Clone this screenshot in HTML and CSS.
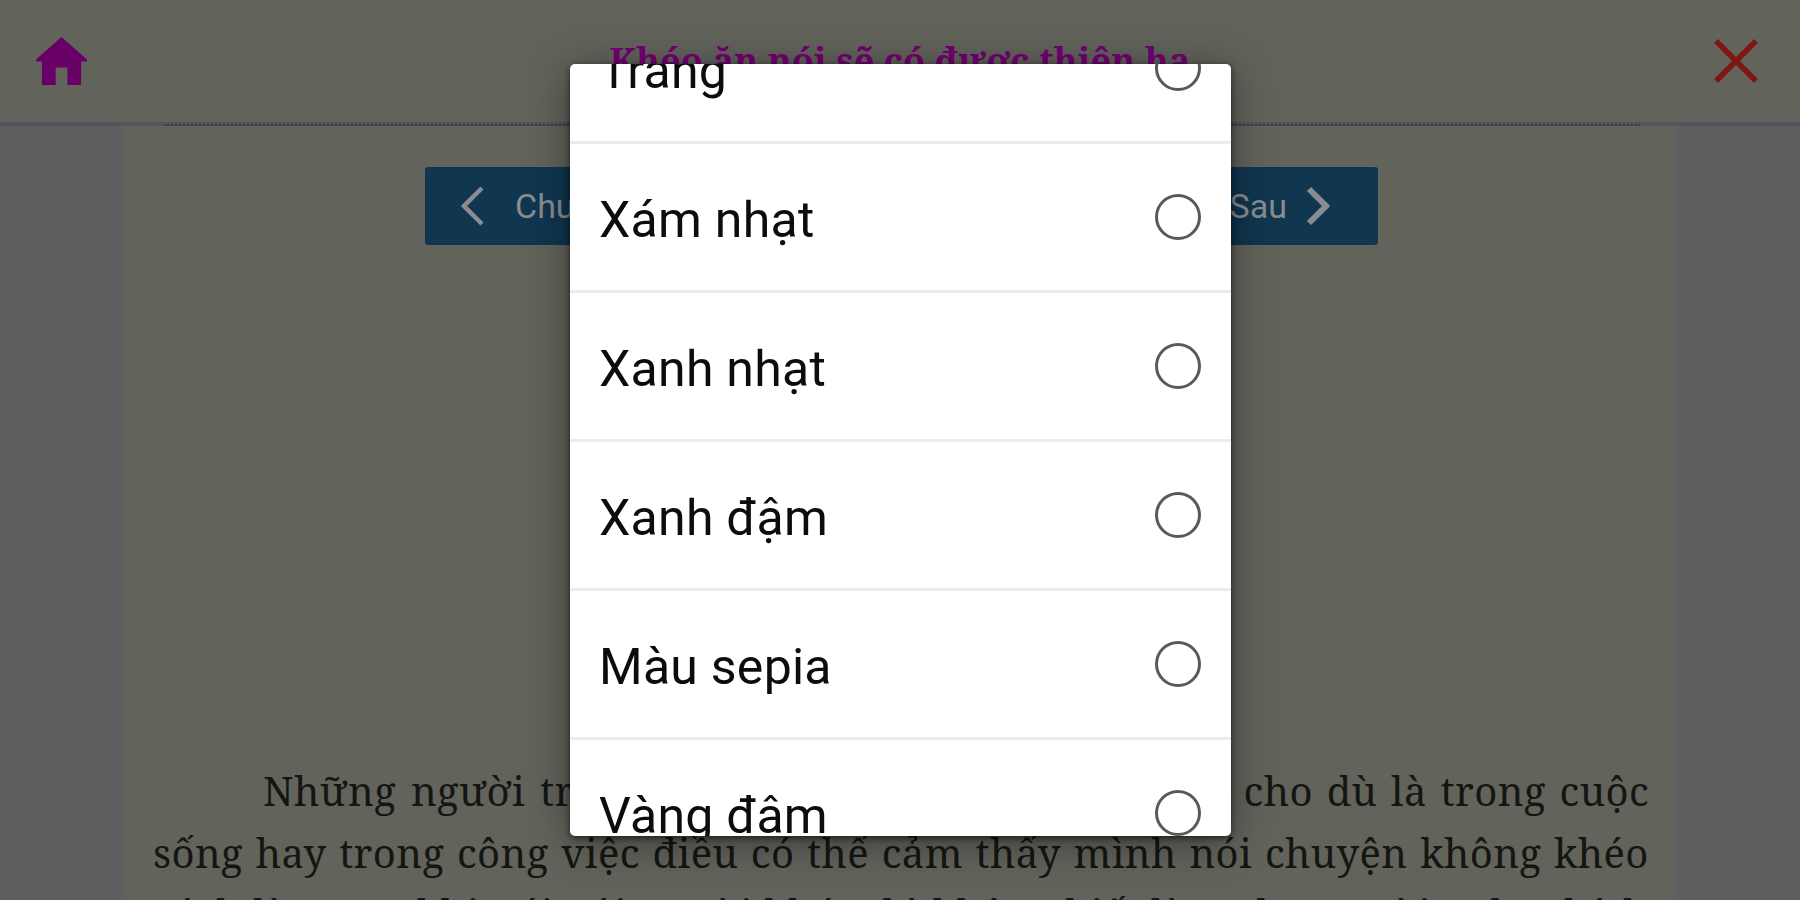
FILE: index.html
```html
<!DOCTYPE html>
<html lang="vi">
<head>
<meta charset="utf-8">
<title>Khéo ăn nói sẽ có được thiên hạ</title>
<link rel="stylesheet" href="styles.css">
</head>
<body>
<header class="topbar">
  <svg class="home" viewBox="0 0 52 50"><path d="M26 0 52 23V25H46V49H32V31H20V49H6V25H0V23Z"/></svg>
  <h1 class="title">Khéo ăn nói sẽ có được thiên hạ</h1>
  <svg class="close" viewBox="0 0 46 46"><path d="M3 3 43 43M43 3 3 43"/></svg>
</header>
<main class="page">
  <div class="dotted"></div>
  <nav class="chapters">
    <span class="prev"><svg class="chev" viewBox="0 0 24 40"><path d="M21 2 3 20 21 38"/></svg><span class="label">Chu</span></span>
    <span class="next"><span class="label">Sau</span><svg class="chev bold" viewBox="0 0 24 40"><path d="M3 3 20 20 3 37"/></svg></span>
  </nav>
  <div class="text">
    <div class="line first"><span class="part">Những người tr</span><span class="part end">cho dù là trong cuộc</span></div>
    <div class="line"><span>sống</span><span>hay</span><span>trong</span><span>công</span><span>việc</span><span>điều</span><span>có</span><span>thể</span><span>cảm</span><span>thấy</span><span>mình</span><span>nói</span><span>chuyện</span><span>không</span><span>khéo</span></div>
    <div class="line third"><span>cách</span><span>là</span><span>trong</span><span>khi</span><span>nói</span><span>với</span><span>người</span><span>khác</span><span>thì</span><span>không</span><span>biết</span><span>làm</span><span>cho</span><span>người</span><span>nghe</span><span>thích</span></div>
  </div>
</main>
<div class="dialog">
  <div class="option"><span>Trắng</span><i class="radio"></i></div>
  <div class="option"><span>Xám nhạt</span><i class="radio"></i></div>
  <div class="option"><span>Xanh nhạt</span><i class="radio"></i></div>
  <div class="option"><span>Xanh đậm</span><i class="radio"></i></div>
  <div class="option"><span>Màu sepia</span><i class="radio"></i></div>
  <div class="option"><span>Vàng đậm</span><i class="radio"></i></div>
</div>
</body>
</html>
```

FILE: styles.css
```css
* { box-sizing: border-box; }
body { margin: 0; width: 1800px; height: 900px; overflow: hidden; background: #5f5f5f; font-family: Roboto, sans-serif; }
.topbar { height: 126px; background: #62635b; border-bottom: 4px solid #54535f; display: flex; justify-content: space-between; align-items: center; padding: 0 41px 0 36px; }
.home { width: 51px; height: 49px; fill: #680068; }
.title { margin: 0; font: bold 36px/40px "Noto Serif", "DejaVu Serif", serif; letter-spacing: .1px; color: #740074; white-space: nowrap; }
.close { width: 46px; height: 46px; stroke: #7e1711; stroke-width: 5.5; fill: none; }
.page { width: 1552px; height: 774px; margin-left: 124px; background: #62635b; display: flex; flex-direction: column; }
.dotted { flex: none; height: 2px; margin: -2px 36px 0 40px; border-top: 2px dotted #3d3c44; }
.chapters { flex: none; margin: 41px 0 0 301px; width: 953px; height: 78px; border-radius: 3px; background: #103650; color: #898d90; font-size: 34px; display: flex; justify-content: space-between; }
.prev, .next { display: flex; align-items: center; }
.prev { padding-left: 36px; gap: 30px; }
.next { padding-right: 48px; gap: 19px; }
.label { padding-bottom: 1px; }
.chev { width: 24px; height: 40px; fill: none; stroke: #898d90; stroke-width: 4.5; }
.chev.bold { stroke-width: 6; }
.text { flex: none; margin: 515px 27px 0 29px; font: 40px/62px "Noto Serif", "DejaVu Serif", serif; letter-spacing: .4px; color: #151612; }
.line { display: flex; justify-content: space-between; height: 62px; white-space: nowrap; }
.first { padding-left: 110px; word-spacing: 4px; }
.end { word-spacing: 2.9px; }
.third { margin-top: -1px; }
.dialog { position: absolute; left: 570px; top: 64px; width: 661px; height: 772px; background: #fff; border-radius: 5px; overflow: hidden; display: flex; flex-direction: column; justify-content: flex-end; box-shadow: 0 6px 44px rgba(0,0,0,.4), 0 2px 6px rgba(0,0,0,.6); }
.option { flex: none; height: 149px; border-bottom: 3px solid #ececec; display: flex; align-items: center; justify-content: space-between; padding: 0 30px 0 29px; font-size: 50px; letter-spacing: .25px; color: #0c0c0c; }
.option span { padding-top: 5px; }
.option:last-child { margin-bottom: -53px; }
.radio { width: 46px; height: 46px; margin-bottom: 1px; border: 3px solid #595959; border-radius: 50%; }
```
